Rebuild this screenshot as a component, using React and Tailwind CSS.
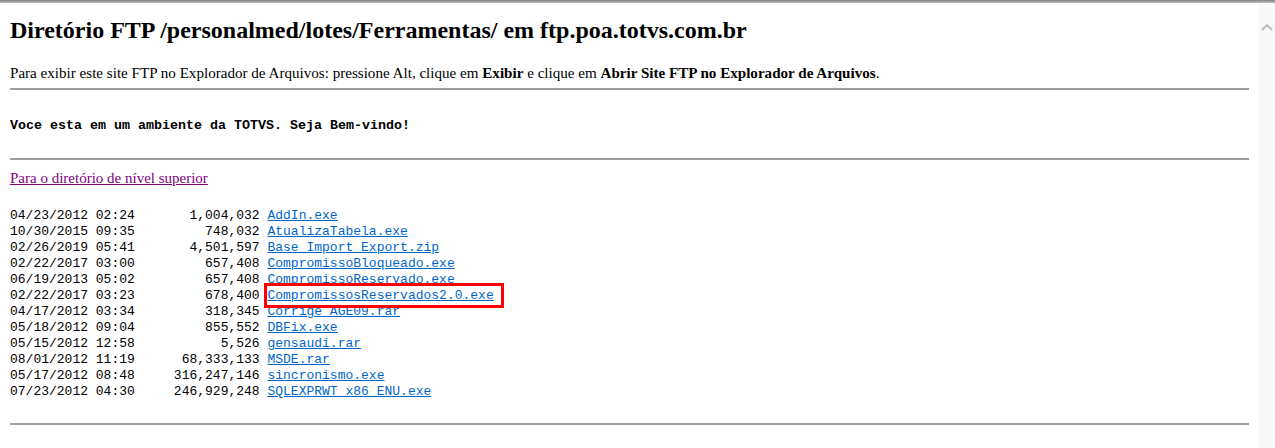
import React from 'react';

const files = [
  ['04/23/2012 02:24', '1,004,032', 'AddIn.exe'],
  ['10/30/2015 09:35', '748,032', 'AtualizaTabela.exe'],
  ['02/26/2019 05:41', '4,501,597', 'Base Import Export.zip'],
  ['02/22/2017 03:00', '657,408', 'CompromissoBloqueado.exe'],
  ['06/19/2013 05:02', '657,408', 'CompromissoReservado.exe'],
  ['02/22/2017 03:23', '678,400', 'CompromissosReservados2.0.exe', true],
  ['04/17/2012 03:34', '318,345', 'Corrige AGE09.rar'],
  ['05/18/2012 09:04', '855,552', 'DBFix.exe'],
  ['05/15/2012 12:58', '5,526', 'gensaudi.rar'],
  ['08/01/2012 11:19', '68,333,133', 'MSDE.rar'],
  ['05/17/2012 08:48', '316,247,146', 'sincronismo.exe'],
  ['07/23/2012 04:30', '246,929,248', 'SQLEXPRWT_x86_ENU.exe'],
];

function App() {
  return (
    <div className="h-[448px] flex flex-col bg-white overflow-hidden text-black">
      <div className="h-[3px] bg-gradient-to-b from-[#7f7f7f] to-[#c4c4c4]" />
      <div className="flex flex-1">
        <div className="flex-1 px-[10px] font-['Liberation_Serif',serif]">
          <h1 className="mt-[13px] text-[24px] leading-[28px] font-bold">
            Diretório FTP /personalmed/lotes/Ferramentas/ em ftp.poa.totvs.com.br
          </h1>
          <p className="mt-[20px] text-[15.1px] leading-[18px]">
            Para exibir este site FTP no Explorador de Arquivos: pressione Alt, clique em <b>Exibir</b> e clique em <b>Abrir Site FTP no Explorador de Arquivos</b>.
          </p>
          <hr className="mt-[6px] border-t-2 border-[#a0a0a0]" />
          <pre className="mt-[28px] font-['Liberation_Mono',monospace] font-bold text-[13.33px] leading-[16px]">
            Voce esta em um ambiente da TOTVS. Seja Bem-vindo!
          </pre>
          <hr className="mt-[24px] border-t-2 border-[#a0a0a0]" />
          <a href="#" className="block mt-[9px] text-[15px] leading-[18px] text-[#800080] underline w-fit">
            Para o diretório de nível superior
          </a>
          <pre className="mt-[21px] font-['Liberation_Mono',monospace] text-[13px] leading-[16px]">
            {files.map(([date, size, name, marked]) => (
              <div key={name}>
                {date + ' ' + size.padStart(15, ' ') + ' '}
                <a
                  href="#"
                  className={`text-[#0066cc] underline ${marked ? 'outline-[3px] outline-solid outline-[#ff0000] pr-[7px] -mr-[7px] py-[2px]' : ''}`}
                >
                  {name}
                </a>
              </div>
            ))}
          </pre>
          <hr className="mt-[23px] border-t-2 border-[#a0a0a0]" />
        </div>
        <div className="w-[16px] bg-[#f8f8f8] flex justify-center pt-[19px]">
          <svg width="12" height="9" viewBox="0 0 12 9">
            <path d="M1 8 L6 3 L11 8" fill="none" stroke="#bdbdbd" strokeWidth="2" />
          </svg>
        </div>
      </div>
    </div>
  );
}

export default App;
